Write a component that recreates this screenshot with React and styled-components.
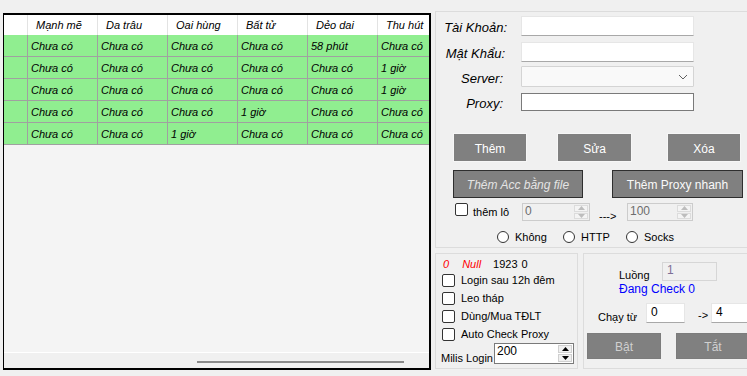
import React from 'react';
import styled, { createGlobalStyle } from 'styled-components';

const Global = createGlobalStyle`
  html, body { margin: 0; padding: 0; background: #f0f0f0; }
  body { font-family: "Liberation Sans", Arial, sans-serif; font-size: 11px; color: #000; }
  * { box-sizing: border-box; }
`;

const Page = styled.div`
  width: 747px;
  height: 376px;
  overflow: hidden;
  display: flex;
  align-items: flex-start;
  gap: 4px;
  padding: 11px 0 0 3px;
`;

/* ---------- data grid ---------- */
const GridFrame = styled.div`
  margin-top: 2px;
  width: 428px;
  height: 357px;
  flex: none;
  border: 2px solid #000;
  border-left-width: 1px;
  background: #f4f4f4;
  display: flex;
  flex-direction: column;
  overflow: hidden;
`;
const GridBody = styled.div`
  flex: 1;
  overflow: hidden;
`;
const GridRow = styled.div`
  display: grid;
  grid-template-columns: 24px repeat(6, 70px);
  width: max-content;
  height: ${p => (p.$header ? 20 : 22)}px;
  background: ${p => (p.$header ? '#fff' : '#90ee90')};
`;
const Cell = styled.div`
  border-right: 1px solid ${p => (p.$header ? '#e3e3e3' : '#a0a0a0')};
  border-bottom: ${p => (p.$header ? 'none' : '1px solid #a0a0a0')};
  font-style: italic;
  font-size: 11px;
  padding-left: ${p => (p.$header ? 8 : 3)}px;
  display: flex;
  align-items: center;
  white-space: nowrap;
  overflow: hidden;
`;
const HScroll = styled.div`
  height: 16px;
  flex: none;
  border-top: 1px solid #fff;
  background: #f0f0f0;
  display: flex;
  align-items: center;
  padding: 2px 0 0 193px;
`;
const HThumb = styled.div`
  width: 207px;
  height: 2px;
  background: #8a8a8a;
`;

/* ---------- side panels ---------- */
const Side = styled.div`
  width: 330px;
  flex: none;
  display: flex;
  flex-direction: column;
  gap: 5px;
`;
const GroupBox = styled.div`
  border: 1px solid #dcdcdc;
  width: ${p => p.$w}px;
  height: ${p => p.$h}px;
  flex: none;
  display: flex;
  flex-direction: column;
`;
const BottomRow = styled.div`
  display: flex;
  gap: 5px;
`;

const FieldRow = styled.div`
  display: grid;
  grid-template-columns: 72px 173px;
  column-gap: 13px;
  height: ${p => p.$h}px;
  margin-top: ${p => p.$mt}px;
`;
const FieldLabel = styled.label`
  font-size: 13px;
  font-style: italic;
  text-align: right;
  padding-right: ${p => p.$pr}px;
  padding-top: 3px;
  display: flex;
  align-items: center;
  justify-content: flex-end;
  white-space: nowrap;
`;
const TextBox = styled.div`
  background: #fff;
  border: 1px solid ${p => (p.$dark ? '#7a7a7a' : '#e6e6e6')};
  border-bottom-color: ${p => (p.$dark ? '#7a7a7a' : '#a8a8a8')};
  width: ${p => (p.$w ? `${p.$w}px` : 'auto')};
  height: ${p => (p.$h ? `${p.$h}px` : 'auto')};
  font-size: 12px;
  padding: 1px 0 0 4px;
  color: #000;
  flex: none;
`;
const Combo = styled.div`
  background: #f9f9f9;
  border: 1px solid #d4d4d4;
  border-radius: 1px;
  display: flex;
  align-items: center;
  justify-content: flex-end;
  padding-right: 5px;
`;

const ButtonRow = styled.div`
  display: flex;
  margin-top: ${p => p.$mt}px;
  padding-left: ${p => p.$pl}px;
`;
const Btn = styled.button`
  width: ${p => p.$w}px;
  height: ${p => p.$h}px;
  margin-left: ${p => p.$ml || 0}px;
  background: #808080;
  color: ${p => p.$fg || '#fff'};
  border: 1px solid ${p => p.$bd || '#f6f6f6'};
  font-family: "Liberation Sans", Arial, sans-serif;
  font-size: 12px;
  font-style: ${p => (p.$italic ? 'italic' : 'normal')};
  padding: 2px 0 0 0;
  display: flex;
  align-items: center;
  justify-content: center;
  white-space: nowrap;
  flex: none;
  cursor: default;
`;

const LotRow = styled.div`
  display: flex;
  align-items: flex-start;
  height: 18px;
  margin-top: 5px;
  padding-left: 19px;
`;
const Box = styled.span`
  width: 13px;
  height: 13px;
  flex: none;
  border: 1px solid #333;
  border-radius: 2px;
  background: #fff;
  display: inline-block;
`;
const InlineText = styled.span`
  display: inline-block;
  width: ${p => (p.$w ? `${p.$w}px` : 'auto')};
  margin-left: ${p => p.$ml || 0}px;
  line-height: ${p => p.$lh || 14}px;
  color: ${p => p.$color || '#000'};
  font-style: ${p => (p.$italic ? 'italic' : 'normal')};
  font-size: ${p => p.$fs || 11}px;
  white-space: nowrap;
  flex: none;
`;
const Spin = styled.div`
  width: ${p => p.$w}px;
  height: ${p => p.$h}px;
  flex: none;
  display: flex;
  background: ${p => (p.$disabled ? '#f0f0f0' : '#fff')};
  border: 1px solid ${p => (p.$disabled ? '#cccccc' : '#7a7a7a')};
  color: ${p => (p.$disabled ? '#6d6d6d' : '#000')};
  font-size: 12px;
`;
const SpinValue = styled.div`
  flex: 1;
  padding: 0 0 0 2px;
  line-height: 14px;
`;
const SpinButtons = styled.div`
  width: 16px;
  display: flex;
  flex-direction: column;
  gap: 1px;
  padding: 1px;
`;
const SpinBtn = styled.div`
  flex: 1;
  background: ${p => (p.$disabled ? '#f4f4f4' : '#f0f0f0')};
  border: 1px solid ${p => (p.$disabled ? '#dcdcdc' : '#d0d0d0')};
  display: flex;
  align-items: center;
  justify-content: center;
`;

const RadioRow = styled.div`
  display: flex;
  align-items: center;
  height: 14px;
  margin-top: 9px;
  padding-left: 61px;
`;
const RadioItem = styled.div`
  display: flex;
  align-items: center;
  gap: 6px;
  width: ${p => (p.$w ? `${p.$w}px` : 'auto')};
  flex: none;
`;
const Circle = styled.span`
  width: 12px;
  height: 12px;
  border: 1px solid #333;
  border-radius: 50%;
  background: #fff;
  flex: none;
`;

const StatusLine = styled.div`
  display: flex;
  align-items: center;
  height: 13px;
  margin-top: 3px;
  padding-left: 7px;
`;
const CheckList = styled.div`
  display: flex;
  flex-direction: column;
  margin-top: 1px;
  padding-left: 6px;
`;
const CheckRow = styled.div`
  display: flex;
  align-items: center;
  gap: 6px;
  height: 18px;
`;
const MilisRow = styled.div`
  display: flex;
  align-items: flex-end;
  height: 21px;
  padding-left: 5px;
`;

const FlowRow = styled.div`
  display: flex;
  align-items: flex-end;
  height: ${p => p.$h}px;
  margin-top: ${p => p.$mt}px;
  padding-left: ${p => p.$pl}px;
`;
const DisabledBox = styled.div`
  width: 55px;
  height: 19px;
  flex: none;
  background: #f0f0f0;
  border: 1px solid #d6d6d6;
  color: #7d6f96;
  font-size: 12px;
  padding: 0 0 0 4px;
  line-height: 15px;
`;

const Tri = ({ up, color }) => (
  <svg width="7" height="4" viewBox="0 0 7 4">
    <polygon points={up ? '0,4 7,4 3.5,0' : '0,0 7,0 3.5,4'} fill={color} />
  </svg>
);

const SpinBox = ({ value, w, h, disabled }) => (
  <Spin $w={w} $h={h} $disabled={disabled}>
    <SpinValue>{value}</SpinValue>
    <SpinButtons>
      <SpinBtn $disabled={disabled}><Tri up color={disabled ? '#bdbdbd' : '#000'} /></SpinBtn>
      <SpinBtn $disabled={disabled}><Tri color={disabled ? '#bdbdbd' : '#000'} /></SpinBtn>
    </SpinButtons>
  </Spin>
);

const headers = ['Mạnh mẽ', 'Da trâu', 'Oai hùng', 'Bất tử', 'Dẻo dai', 'Thu hút'];
const rows = [
  ['Chưa có', 'Chưa có', 'Chưa có', 'Chưa có', '58 phút', 'Chưa có'],
  ['Chưa có', 'Chưa có', 'Chưa có', 'Chưa có', 'Chưa có', '1 giờ'],
  ['Chưa có', 'Chưa có', 'Chưa có', 'Chưa có', 'Chưa có', '1 giờ'],
  ['Chưa có', 'Chưa có', 'Chưa có', '1 giờ', 'Chưa có', 'Chưa có'],
  ['Chưa có', 'Chưa có', '1 giờ', 'Chưa có', 'Chưa có', 'Chưa có'],
];

export default function App() {
  return (
    <>
      <Global />
      <Page>
        <GridFrame>
          <GridBody>
            <GridRow $header>
              <Cell $header />
              {headers.map(h => <Cell $header key={h}>{h}</Cell>)}
            </GridRow>
            {rows.map((r, i) => (
              <GridRow key={i}>
                <Cell />
                {r.map((c, j) => <Cell key={j}>{c}</Cell>)}
              </GridRow>
            ))}
          </GridBody>
          <HScroll><HThumb /></HScroll>
        </GridFrame>

        <Side>
          <GroupBox $w={330} $h={237}>
            <FieldRow $h={20} $mt={4}>
              <FieldLabel $pr={1}>Tài Khoản:</FieldLabel>
              <TextBox />
            </FieldRow>
            <FieldRow $h={20} $mt={6}>
              <FieldLabel $pr={3}>Mật Khẩu:</FieldLabel>
              <TextBox />
            </FieldRow>
            <FieldRow $h={21} $mt={4}>
              <FieldLabel $pr={5}>Server:</FieldLabel>
              <Combo>
                <svg width="10" height="6" viewBox="0 0 10 6">
                  <polyline points="1,1 5,5 9,1" fill="none" stroke="#606060" strokeWidth="1" />
                </svg>
              </Combo>
            </FieldRow>
            <FieldRow $h={18} $mt={6}>
              <FieldLabel $pr={5}>Proxy:</FieldLabel>
              <TextBox $dark />
            </FieldRow>

            <ButtonRow $mt={22} $pl={17}>
              <Btn $w={74} $h={29}>Thêm</Btn>
              <Btn $w={75} $h={29} $ml={30}>Sửa</Btn>
              <Btn $w={74} $h={29} $ml={35}>Xóa</Btn>
            </ButtonRow>
            <ButtonRow $mt={8} $pl={17}>
              <Btn $w={130} $h={28} $bd="#2e2e2e" $fg="#e4e4e4" $italic>Thêm Acc bằng file</Btn>
              <Btn $w={131} $h={28} $ml={29} $bd="#2e2e2e" $fg="#fafafa">Thêm Proxy nhanh</Btn>
            </ButtonRow>

            <LotRow>
              <Box />
              <InlineText $ml={5} $w={49} $lh={18}>thêm lô</InlineText>
              <SpinBox value="0" w={68} h={18} disabled />
              <InlineText $ml={9} $w={28} $lh={26}>---&gt;</InlineText>
              <SpinBox value="100" w={66} h={18} disabled />
            </LotRow>

            <RadioRow>
              <RadioItem $w={66}><Circle /><InlineText>Không</InlineText></RadioItem>
              <RadioItem $w={63}><Circle /><InlineText>HTTP</InlineText></RadioItem>
              <RadioItem><Circle /><InlineText>Socks</InlineText></RadioItem>
            </RadioRow>
          </GroupBox>

          <BottomRow>
            <GroupBox $w={143} $h={116}>
              <StatusLine>
                <InlineText $color="#ff0000" $italic>0</InlineText>
                <InlineText $color="#ff0000" $italic $ml={13}>Null</InlineText>
                <InlineText $ml={12}>1923</InlineText>
                <InlineText $ml={4}>0</InlineText>
              </StatusLine>
              <CheckList>
                <CheckRow><Box /><InlineText>Login sau 12h đêm</InlineText></CheckRow>
                <CheckRow><Box /><InlineText>Leo tháp</InlineText></CheckRow>
                <CheckRow><Box /><InlineText>Dùng/Mua TĐLT</InlineText></CheckRow>
                <CheckRow><Box /><InlineText>Auto Check Proxy</InlineText></CheckRow>
              </CheckList>
              <MilisRow>
                <InlineText $w={53} $lh={12}>Milis Login</InlineText>
                <SpinBox value="200" w={80} h={21} />
              </MilisRow>
            </GroupBox>

            <GroupBox $w={200} $h={116}>
              <FlowRow $h={19} $mt={8} $pl={35}>
                <InlineText $w={43} $lh={12}>Luồng</InlineText>
                <DisabledBox>1</DisabledBox>
              </FlowRow>
              <FlowRow $h={14} $mt={1} $pl={35}>
                <InlineText $color="#0000ff" $fs={12}>Đang Check 0</InlineText>
              </FlowRow>
              <FlowRow $h={20} $mt={7} $pl={14}>
                <InlineText $w={48} $lh={12}>Chạy từ</InlineText>
                <TextBox $w={39} $h={20}>0</TextBox>
                <InlineText $ml={13} $w={13} $lh={16}>-&gt;</InlineText>
                <TextBox $w={40} $h={20}>4</TextBox>
              </FlowRow>
              <ButtonRow $mt={10} $pl={3}>
                <Btn $w={74} $h={26} $bd="#7c7c7c" $fg="#d0d0d0">Bật</Btn>
                <Btn $w={74} $h={26} $ml={15} $bd="#7c7c7c" $fg="#d0d0d0">Tắt</Btn>
              </ButtonRow>
            </GroupBox>
          </BottomRow>
        </Side>
      </Page>
    </>
  );
}
